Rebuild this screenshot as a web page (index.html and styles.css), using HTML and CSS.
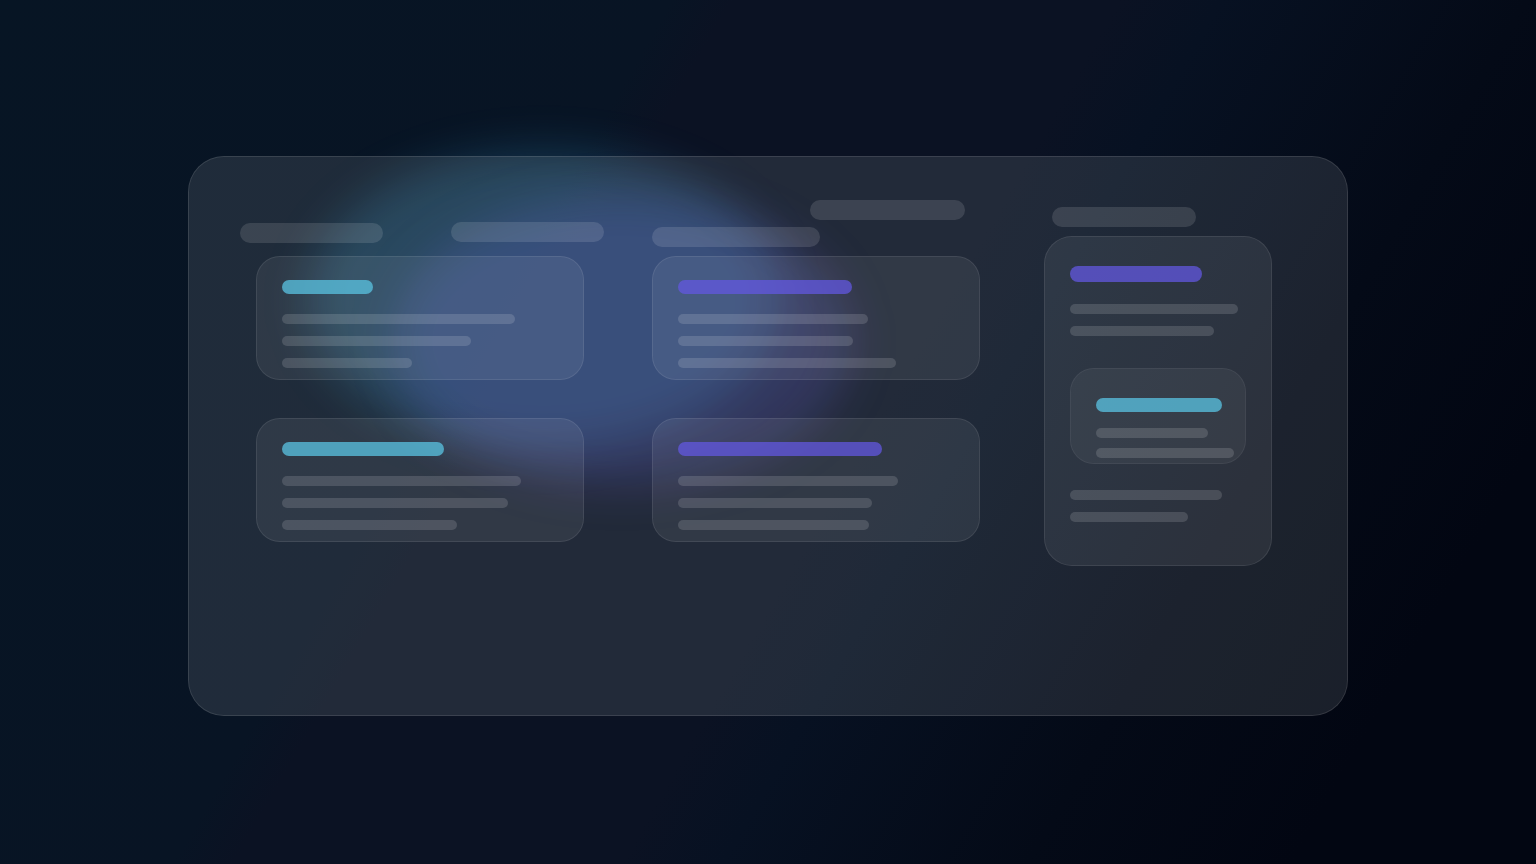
FILE: index.html
```html
<!DOCTYPE html>
<html lang="en">
<head>
  <meta charset="utf-8">
  <meta name="viewport" content="width=device-width, initial-scale=1">
  <title>Loading</title>
  <link rel="stylesheet" href="styles.css">
</head>
<body>
  <main class="stage">
    <div class="shell" aria-busy="true">
      <div class="glow glow-teal"></div>
      <div class="glow glow-violet"></div>
      <div class="panel">
        <div class="pills">
          <div class="pill pill-a"></div>
          <div class="pill pill-b"></div>
          <div class="pill pill-c"></div>
          <div class="pill pill-d"></div>
          <div class="pill pill-e"></div>
        </div>
        <div class="columns">
          <section class="cards">
            <article class="card">
              <div class="title teal w91"></div>
              <div class="line w233"></div>
              <div class="line w189"></div>
              <div class="line w130"></div>
            </article>
            <article class="card">
              <div class="title violet w174"></div>
              <div class="line w190"></div>
              <div class="line w175"></div>
              <div class="line w218"></div>
            </article>
            <article class="card">
              <div class="title teal w162"></div>
              <div class="line w239"></div>
              <div class="line w226"></div>
              <div class="line w175"></div>
            </article>
            <article class="card">
              <div class="title violet w204"></div>
              <div class="line w220"></div>
              <div class="line w194"></div>
              <div class="line w191"></div>
            </article>
          </section>
          <aside class="side">
            <div class="title title-large violet w132"></div>
            <div class="line w168"></div>
            <div class="line w144"></div>
            <div class="inset">
              <div class="title teal w126"></div>
              <div class="line w112"></div>
              <div class="line w138"></div>
            </div>
            <div class="line w152"></div>
            <div class="line w118"></div>
          </aside>
        </div>
      </div>
    </div>
  </main>
</body>
</html>
```

FILE: styles.css
```css
* { box-sizing: border-box; }

body {
  margin: 0;
  font-family: Inter, sans-serif;
  background: #020410;
}

.stage {
  min-height: 100vh;
  padding: 8px 24px 0;
  display: flex;
  align-items: center;
  justify-content: center;
  overflow: hidden;
  background: linear-gradient(120deg, #071524 0%, #081424 33%, #0b1223 36%, #0b1223 55%, #071122 60%, #040a17 75%, #020612 88%, #020612 100%);
}

.shell {
  position: relative;
  width: 100%;
  max-width: 1160px;
}

/* Soft lights behind the glass */
.glow {
  position: absolute;
  border-radius: 50%;
  filter: blur(22px);
}

.glow-teal {
  left: 120px;
  top: -6px;
  width: 472px;
  height: 300px;
  background: rgba(60, 180, 240, 0.2);
}

.glow-violet {
  left: 204px;
  top: 40px;
  width: 460px;
  height: 290px;
  background: rgba(100, 96, 240, 0.2);
}

.panel {
  position: relative;
  min-height: 560px;
  padding: 43px 75px 43px 51px;
  border: 1px solid rgba(255, 255, 255, 0.2);
  border-radius: 36px;
  background: rgba(250, 255, 255, 0.1);
  background-clip: padding-box;
}

.pills {
  height: 36px;
  display: grid;
  grid-template-columns:
    minmax(0, 211fr) minmax(0, 201fr) minmax(0, 158fr)
    minmax(0, 242fr) minmax(0, 220fr);
  align-items: start;
}

.pill {
  height: 20px;
  border-radius: 10px;
  background: rgba(255, 255, 255, 0.12);
}

.pill-a { width: 143px; margin-top: 23px; }
.pill-b { width: 153px; margin-top: 22px; }
.pill-c { width: 168px; margin-top: 27px; }
.pill-d { width: 155px; }
.pill-e { width: 144px; margin-top: 7px; }

.columns {
  display: flex;
  align-items: flex-start;
  gap: 64px;
  padding-left: 16px;
}

.cards {
  flex: 1;
  display: grid;
  grid-template-columns: 1fr 1fr;
  gap: 38px 68px;
  padding-top: 20px;
}

.card,
.side,
.inset {
  border: 1px solid rgba(255, 255, 255, 0.15);
  background: rgba(255, 255, 255, 0.07);
  background-clip: padding-box;
}

.card {
  height: 124px;
  padding: 23px 25px;
  border-radius: 24px;
}

.side {
  width: 228px;
  padding: 29px 25px 43px;
  border-radius: 28px;
}

.inset {
  margin: 32px 0 26px;
  padding: 29px 25px 5px;
  border-radius: 24px;
  border-color: rgba(255, 255, 255, 0.1);
  background-color: rgba(255, 255, 255, 0.05);
}

.title {
  height: 14px;
  border-radius: 8px;
  margin-bottom: 20px;
}

.title-large {
  height: 16px;
  margin-bottom: 22px;
}

.inset .title { margin-bottom: 16px; }

.teal { background: rgba(87, 188, 218, 0.8); }
.violet { background: rgba(98, 88, 225, 0.74); }

.line {
  height: 10px;
  border-radius: 5px;
  background: rgba(255, 255, 255, 0.14);
}

.line + .line { margin-top: 12px; }
.inset .line + .line { margin-top: 10px; }

.w91 { width: 91px; }
.w112 { width: 112px; }
.w118 { width: 118px; }
.w126 { width: 126px; }
.w130 { width: 130px; }
.w132 { width: 132px; }
.w138 { width: 138px; }
.w144 { width: 144px; }
.w152 { width: 152px; }
.w162 { width: 162px; }
.w168 { width: 168px; }
.w174 { width: 174px; }
.w175 { width: 175px; }
.w189 { width: 189px; }
.w190 { width: 190px; }
.w191 { width: 191px; }
.w194 { width: 194px; }
.w204 { width: 204px; }
.w218 { width: 218px; }
.w220 { width: 220px; }
.w226 { width: 226px; }
.w233 { width: 233px; }
.w239 { width: 239px; }
```
